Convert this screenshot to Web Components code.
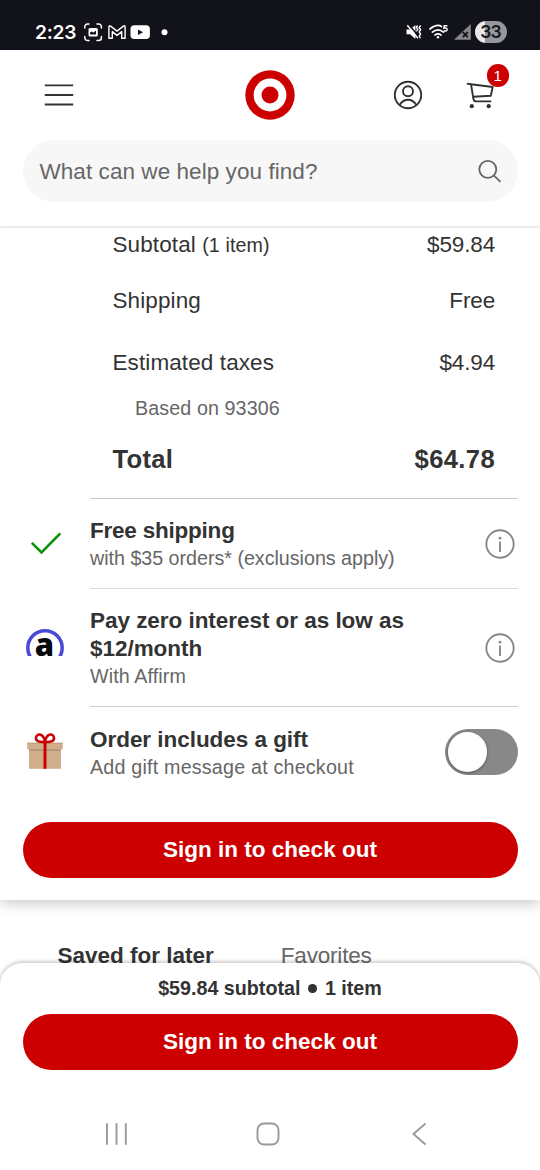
<!DOCTYPE html>
<html lang="en">
<head>
<meta charset="utf-8">
<title>Cart</title>
<style>
html,body{margin:0;padding:0;height:1170px;overflow:hidden;background:#fff}
body{font-family:"Liberation Sans",Arial,sans-serif;color:#333}
</style>
</head>
<body>
<cart-screen></cart-screen>
<script>
function define(name, html) {
  const t = document.createElement('template');
  t.innerHTML = html;
  customElements.define(name, class extends HTMLElement {
    constructor() {
      super();
      this.attachShadow({ mode: 'open' }).append(t.content.cloneNode(true));
    }
  });
}

define('status-bar', `
<style>
:host{display:flex;height:50px;box-sizing:border-box;background:#12131a;color:#fff;padding:14px 33px 0 35px;justify-content:space-between;align-items:flex-start}
.time{font:600 19.2px/36px Inter,sans-serif;letter-spacing:-.25px;width:49px;white-space:nowrap}
.side{display:flex;height:36px;align-items:center}
svg{display:block;flex:none}
.bat{width:32px;height:22px;border-radius:11px;background:linear-gradient(90deg,#e9e9ea 0 32%,#97989b 32%);color:#17181e;font:600 17.5px/22px Inter,sans-serif;text-align:center;margin-left:4px;letter-spacing:-1px;text-indent:-1px}
</style>
<div class="side"><span class="time">2:23</span>
<svg width="88" height="20" viewBox="84 22 88 20" fill="none" stroke="#fff">
<path d="M84.8 28v-1.2a2.8 2.8 0 0 1 2.8-2.8H89M97 24h1.6a2.8 2.8 0 0 1 2.8 2.8V28M101.400 36.500v1.200a2.800 2.800 0 0 1-2.800 2.800H97M89 40.500h-1.400a2.800 2.800 0 0 1-2.800-2.800v-1.200" stroke-width="1.5" stroke-linecap="round"/>
<rect x="88.500" y="28" width="9.300" height="8.500" rx="1.500" fill="#fff" stroke="none"/><path d="M90 34.500v-2l2-1 1.500 1 2.500-2v4z" fill="#12131a" stroke="none"/>
<path d="M108.900 38.200V27q0-1.800 1.700-.9l6.400 5 6.400-5q1.700-.9 1.700.9v11.200h-3.400v-6.600l-4.700 3.800-4.700-3.800v6.600z" stroke-width="1.400" stroke-linejoin="round"/>
<rect x="130.500" y="25.200" width="19.400" height="13.800" rx="3.800" fill="#fff" stroke="none"/><path d="M138 29.400v5.500l5-2.750z" fill="#12131a" stroke="none"/>
<circle cx="164.500" cy="32.200" r="3" fill="#fff" stroke="none"/>
</svg></div>
<div class="side">
<svg width="66" height="20" viewBox="405 22 66 20" fill="none" stroke="#fff">
<path d="M406.500 29.600h3.600l5.300-4.600v14l-5.300-4.700h-3.600z" fill="#fff" stroke="none"/>
<path d="M408.800 24.500L419 37" stroke="#12131a" stroke-width="1.600"/><path d="M407.300 25.200L418 38.400" stroke-width="1.500"/>
<path d="M417.600 25.500l-1.200 1.800 1.400 2-1.400 2M420.600 25.500l-1.400 2 1.400 2.200-1.400 2.200 1.400 2.200-1.400 2.200 1.200 1.800" stroke-width="1.400"/>
<path d="M429.900 29q7.300-5.600 11.700-2.400M432.400 32.200q5.600-4.600 11.200 0M435 35q3-2.300 6 0" stroke-width="1.700" stroke-linecap="round"/><circle cx="438" cy="37.300" r="1.200" fill="#fff" stroke="none"/>
<path d="M447.400 25.700h-3.200l-.300 2.600q3.300-.8 3.300 1.200 0 2.100-3.500 1.300" stroke-width="1.400"/>
<path d="M454 39.800L470.800 24v15.800z" fill="#85868b" stroke="none"/><path d="M462.800 32.200l5 5m0-5l-5 5" stroke="#12131a" stroke-width="1.900"/>
</svg><span class="bat">33</span></div>`);

define('bullseye-logo', `
<style>:host{display:block;width:50px;height:50px}svg{display:block}</style>
<svg width="50" height="50"><circle cx="25" cy="25" r="24.700" fill="#c00"/><circle cx="25" cy="25" r="16.400" fill="#fff"/><circle cx="25" cy="25" r="8.500" fill="#c00"/></svg>`);

define('cart-button', `
<style>
:host{display:block;position:relative;width:44px;height:46px}
svg{display:block}
.badge{position:absolute;left:21.500px;top:-8px;width:22.500px;height:22.500px;border-radius:50%;background:#c00;color:#fff;font-size:15px;line-height:23px;text-align:center}
</style>
<svg width="44" height="46" viewBox="465 72 44 46" fill="none" stroke="#333" stroke-width="1.900" stroke-linejoin="round">
<path d="M466.800 83.600l4.200.6 21.700 2.800-1.900 8.700-17.600 1M471 84.200l2.400 14.600q.4 2.600 2.800 2.600h15"/><circle cx="471.800" cy="106.200" r="2.100" fill="#333" stroke="none"/><circle cx="488.700" cy="106.200" r="2.100" fill="#333" stroke="none"/></svg>
<span class="badge">1</span>`);

define('search-field', `
<style>
:host{display:flex;height:61.500px;margin:0 22.500px;box-sizing:border-box;border-radius:31px;background:#f7f7f7;align-items:center;justify-content:space-between;padding:0 16px 0 17px;color:#666;font-size:22.500px;letter-spacing:.060px;white-space:nowrap}
svg{display:block}
span{padding-top:2px}
</style>
<span><slot></slot></span>
<svg width="25" height="26" viewBox="0 0 25 26" fill="none" stroke="#666" stroke-width="1.800"><circle cx="10.800" cy="11.300" r="8.500"/><path d="M16.800 17.300l6.700 6.500"/></svg>`);

define('app-header', `
<style>
:host{display:block;position:relative;z-index:2;height:176px;background:#fff;box-shadow:0 1px 3px rgba(0,0,0,.15)}
.row{display:grid;grid-template-columns:1fr 50px 1fr;align-items:center;height:90px;padding:0 31px 0 44px;box-sizing:border-box}
.row bullseye-logo{margin-left:-6.500px}
.acts{display:flex;justify-content:flex-end;align-items:center;gap:42px}
svg{display:block}
</style>
<div class="row">
<svg width="30" height="24" stroke="#333" stroke-width="1.900"><path d="M.8 2.400h28.400M.8 12h28.400M.8 21.500h28.400"/></svg>
<bullseye-logo></bullseye-logo>
<div class="acts">
<svg width="30" height="30" fill="none" stroke="#333" stroke-width="1.900"><circle cx="15" cy="15" r="13.200"/><circle cx="15" cy="11.300" r="5"/><path d="M6.800 24.800q3.200-5 8.200-5t8.200 5"/></svg>
<cart-button></cart-button></div>
</div>
<search-field>What can we help you find?</search-field>`);

define('price-row', `
<style>
:host{display:flex;justify-content:space-between;align-items:center;height:var(--h,50px);padding:0 45px 0 112.500px;font-size:22.500px;line-height:28px;letter-spacing:.1px;white-space:nowrap}
::slotted([slot=price]){letter-spacing:-.15px}
:host([total]){font-weight:700;font-size:25.600px;letter-spacing:.3px}
:host([total]) ::slotted([slot=price]){letter-spacing:.350px}
:host([note]){padding-left:135px;font-size:19.700px;color:#666}
::slotted(small){font-size:19.700px}
</style>
<span><slot></slot></span><slot name="price"></slot>`);

define('info-icon', `
<style>:host{display:block}svg{display:block}</style>
<svg width="30" height="30" fill="none" stroke="#888" stroke-width="1.900"><circle cx="15" cy="15" r="13.700"/><path d="M15 12.600v10.400"/><circle cx="15" cy="9.200" r="1.400" fill="#888" stroke="none"/></svg>`);

define('toggle-switch', `
<style>
:host{display:flex;box-sizing:border-box;width:73px;height:45.500px;border-radius:23px;background:#888;padding:3px;align-items:center}
i{width:39.500px;height:39.500px;border-radius:50%;background:#fff;box-shadow:0 1px 3px rgba(0,0,0,.4)}
</style><i></i>`);

define('check-icon', `
<style>:host{display:block}svg{display:block}</style>
<svg width="40" height="40" viewBox="0 0 40 40"><path d="M6.800 19.800l9.700 9.600L35.300 10.400" fill="none" stroke="#0a910a" stroke-width="2.600"/></svg>`);

define('affirm-icon', `
<style>
:host{display:block;position:relative;width:40px;height:40px}
svg{display:block}
span{position:absolute;left:0;width:39px;top:0;text-align:center;font:800 31px/34px "Open Sans",sans-serif;color:#060809}
</style>
<svg width="40" height="29"><circle cx="20" cy="21" r="17.200" fill="none" stroke="#4a4ad8" stroke-width="3.500"/></svg><span>a</span>`);

define('gift-icon', `
<style>:host{display:block}svg{display:block}</style>
<svg width="40" height="40" viewBox="25 731.500 40 40"><path d="M29 747h32v21.300H29z" fill="#d0ae8b"/><path d="M29 748.500h32v2H29z" fill="#b39676"/><path d="M27.200 742.300h35.600v6.400H27.200z" fill="#d0ae8b"/><path d="M27.200 742.300h35.600v1H27.200z" fill="#bd9d7c"/><path d="M43.500 741h3v27.300h-3z" fill="#c00"/><path d="M45 741.300q-9.500 1-9-4.300.9-3.700 4.600-2.700Q44 735.500 45 741.300zM45 741.300q9.500 1 9-4.300-.9-3.700-4.600-2.700Q46 735.500 45 741.300z" fill="none" stroke="#c00" stroke-width="2.500"/></svg>`);

define('offer-row', `
<style>
:host{display:flex;box-sizing:border-box;padding:0 22.500px 0 25px;height:var(--h);white-space:nowrap}
.ic{width:40px;margin-right:25px;display:flex;align-items:center}
.body{flex:1;display:flex;justify-content:space-between;align-items:center;border-top:1px solid var(--line,#ddd);box-sizing:border-box}
.text{align-self:flex-start;padding-top:var(--pt,18px)}
.t{font-weight:700;font-size:22.500px;line-height:28.100px;letter-spacing:var(--tls,0)}
.s{font-size:19.700px;line-height:27px;color:#666;letter-spacing:var(--ls,.1px)}
::slotted([slot=action]){margin-right:var(--am,2.500px)}
</style>
<div class="ic"><slot name="icon"></slot></div>
<div class="body"><div class="text"><div class="t"><slot></slot></div><div class="s"><slot name="sub"></slot></div></div><slot name="action"></slot></div>`);

define('primary-button', `
<style>
:host{display:block;margin:0 22.500px;height:56px;border-radius:28px;background:#c00;color:#fff;font-weight:700;font-size:22.500px;line-height:56px;text-align:center;white-space:nowrap}
</style><slot></slot>`);

define('order-summary', `
<style>
:host{display:block;position:relative;z-index:1;height:674px;background:#fff;box-shadow:0 2px 14px rgba(0,0,0,.25)}
primary-button{margin-top:24.500px}
</style>
<price-row style="--h:38px">Subtotal <small>(1 item)</small><span slot="price">$59.84</span></price-row>
<price-row style="--h:74px">Shipping<span slot="price">Free</span></price-row>
<price-row style="--h:50px">Estimated taxes<span slot="price">$4.94</span></price-row>
<price-row note style="--h:40px">Based on 93306</price-row>
<price-row total style="--h:61px">Total<span slot="price">$64.78</span></price-row>
<offer-row style="--h:90px;--line:#c8c8c8;--tls:-.22px;--ls:-.02px;margin-top:9px"><check-icon slot="icon"></check-icon>Free shipping<span slot="sub">with $35 orders* (exclusions apply)</span><info-icon slot="action"></info-icon></offer-row>
<offer-row style="--h:118px;--tls:-.04px"><affirm-icon slot="icon"></affirm-icon>Pay zero interest or as low as<br>$12/month<span slot="sub">With Affirm</span><info-icon slot="action"></info-icon></offer-row>
<offer-row style="--h:91px;--ls:.2px;--pt:19px;--am:0px;--line:#ccc;--tls:-.04px"><gift-icon slot="icon"></gift-icon>Order includes a gift<span slot="sub">Add gift message at checkout</span><toggle-switch slot="action"></toggle-switch></offer-row>
<primary-button>Sign in to check out</primary-button>`);

define('saved-tabs', `
<style>
:host{display:flex;height:63px;padding:42px 0 0 57.500px;box-sizing:border-box;font-size:22.500px;line-height:28px;gap:67px;overflow:hidden;color:#666;white-space:nowrap}
b{color:#333}
span{letter-spacing:-.2px}
</style><b>Saved for later</b><span>Favorites</span>`);

define('checkout-footer', `
<style>
:host{display:block;position:relative;z-index:2;height:137px;background:#fff;border-radius:22px 22px 0 0;box-shadow:0 -1px 4px rgba(0,0,0,.28)}
p{margin:0;height:51px;display:flex;justify-content:center;align-items:center;gap:8px;font-weight:700;font-size:19.700px;white-space:nowrap;letter-spacing:0}
i{width:8.500px;height:8.500px;border-radius:50%;background:#333}
</style>
<p><span>$59.84 subtotal</span><i></i><span>1 item</span></p>
<primary-button>Sign in to check out</primary-button>`);

define('system-nav', `
<style>:host{display:flex;box-sizing:border-box;height:70px;background:#fff;position:relative;z-index:3;padding:0 113px 1.500px 105px;justify-content:space-between;align-items:center}svg{display:block}.home{margin-right:4px}</style>
<svg width="24" height="24" stroke="#999" stroke-width="1.900"><path d="M2 1.300v21.400M11.500 1.300v21.400M20.800 1.300v21.400"/></svg>
<svg class="home" width="24" height="24" fill="none" stroke="#999" stroke-width="1.900"><rect x="1.500" y="1.500" width="21" height="21" rx="6.500"/></svg>
<svg width="16" height="24" fill="none" stroke="#999" stroke-width="1.900"><path d="M14.500 1.500L2.500 12l12 10.500"/></svg>`);

define('cart-screen', `
<style>:host{display:flex;flex-direction:column;width:540px;height:1170px;background:#fff;overflow:hidden}:host>*{flex:none}</style>
<status-bar></status-bar><app-header></app-header><order-summary></order-summary><saved-tabs></saved-tabs><checkout-footer></checkout-footer><system-nav></system-nav>`);
</script>
</body>
</html>
